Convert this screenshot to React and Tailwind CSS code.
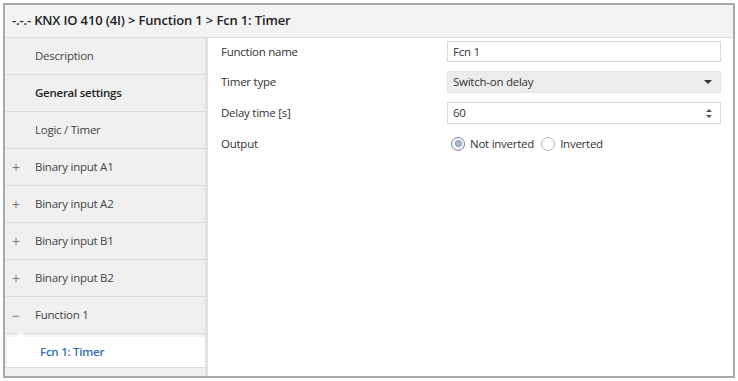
import { useState } from 'react'

const font = { fontFamily: '"Open Sans", "Noto Sans", sans-serif' }

const navItems = [
  { label: 'Description' },
  { label: 'General settings', bold: true },
  { label: 'Logic / Timer' },
  { label: 'Binary input A1', sign: '+' },
  { label: 'Binary input A2', sign: '+' },
  { label: 'Binary input B1', sign: '+' },
  { label: 'Binary input B2', sign: '+' },
  { label: 'Function 1', sign: '−' },
]

function Radio({ checked, label, onClick }) {
  return (
    <button onClick={onClick} className="flex items-center gap-[5px]">
      <span
        className={`w-[14px] h-[14px] rounded-full border flex items-center justify-center ${
          checked ? 'border-[#7a8aa6] bg-[#eef2f8]' : 'border-[#b5b5b5] bg-white'
        }`}
      >
        {checked && <span className="w-[7px] h-[7px] rounded-full bg-[#a7b7d4] border border-[#8494b2]" />}
      </span>
      <span className="text-[#333]">{label}</span>
    </button>
  )
}

export default function App() {
  const [inverted, setInverted] = useState(false)

  return (
    <div className="w-[738px] h-[381px] bg-white p-[3px] text-[11.5px] tracking-[-0.25px] text-[#333]" style={font}>
      <div className="h-full border-2 border-[#a9a9a9] flex flex-col">
        {/* header */}
        <div className="h-[33px] shrink-0 bg-[#f3f3f3] border-b border-[#dcdcdc] flex items-center pl-[7px]">
          <span className="text-[13px] font-semibold text-[#222] tracking-[-0.15px]">
            -.-.- KNX IO 410 (4I) &gt; Function 1 &gt; Fcn 1: Timer
          </span>
        </div>

        <div className="flex flex-1 min-h-0">
          {/* sidebar */}
          <div className="w-[203px] shrink-0 bg-[#f0f0f0] border-r-[3px] border-[#e2e2e2] flex flex-col overflow-hidden">
            {navItems.map((item) => (
              <div
                key={item.label}
                className="h-[37px] shrink-0 border-b border-[#dcdcdc] flex items-center"
              >
                <span className="w-[30px] pl-[7px] text-[14px] text-[#777]">{item.sign}</span>
                <span className={item.bold ? 'font-semibold text-[#222]' : 'text-[#444]'}>{item.label}</span>
              </div>
            ))}
            <div className="relative h-[30px] shrink-0 mt-[3px] ml-[2px] bg-white flex items-center pl-[33px]">
              <span className="absolute -top-[5px] left-[9px] w-0 h-0 border-x-[5px] border-x-transparent border-b-[5px] border-b-white" />
              <span className="font-semibold text-[#2f6fad]">Fcn 1: Timer</span>
            </div>
            <div className="flex-1 border-t border-[#dcdcdc]" />
          </div>

          {/* content */}
          <div className="flex-1 bg-white pt-[3px] pl-[13px] pr-[12px]">
            <div className="grid grid-cols-[226px_1fr] gap-y-[9px] items-center">
              <span>Function name</span>
              <div className="h-[21px] border border-[#d9d9d9] flex items-center px-[5px]">Fcn 1</div>

              <span>Timer type</span>
              <div className="h-[22px] bg-[#ececec] border border-[#e4e4e4] flex items-center justify-between px-[5px]">
                <span>Switch-on delay</span>
                <span className="w-0 h-0 border-x-[4px] border-x-transparent border-t-[4px] border-t-[#333] mr-[3px]" />
              </div>

              <span>Delay time [s]</span>
              <div className="h-[22px] border border-[#d9d9d9] flex items-center justify-between px-[5px]">
                <span>60</span>
                <span className="flex flex-col gap-[3px] mr-[3px]">
                  <span className="w-0 h-0 border-x-[3px] border-x-transparent border-b-[3px] border-b-[#555]" />
                  <span className="w-0 h-0 border-x-[3px] border-x-transparent border-t-[3px] border-t-[#555]" />
                </span>
              </div>

              <span>Output</span>
              <div className="h-[21px] flex items-center gap-[7px] pl-[4px]">
                <Radio checked={!inverted} label="Not inverted" onClick={() => setInverted(false)} />
                <Radio checked={inverted} label="Inverted" onClick={() => setInverted(true)} />
              </div>
            </div>
          </div>
        </div>
      </div>
    </div>
  )
}
